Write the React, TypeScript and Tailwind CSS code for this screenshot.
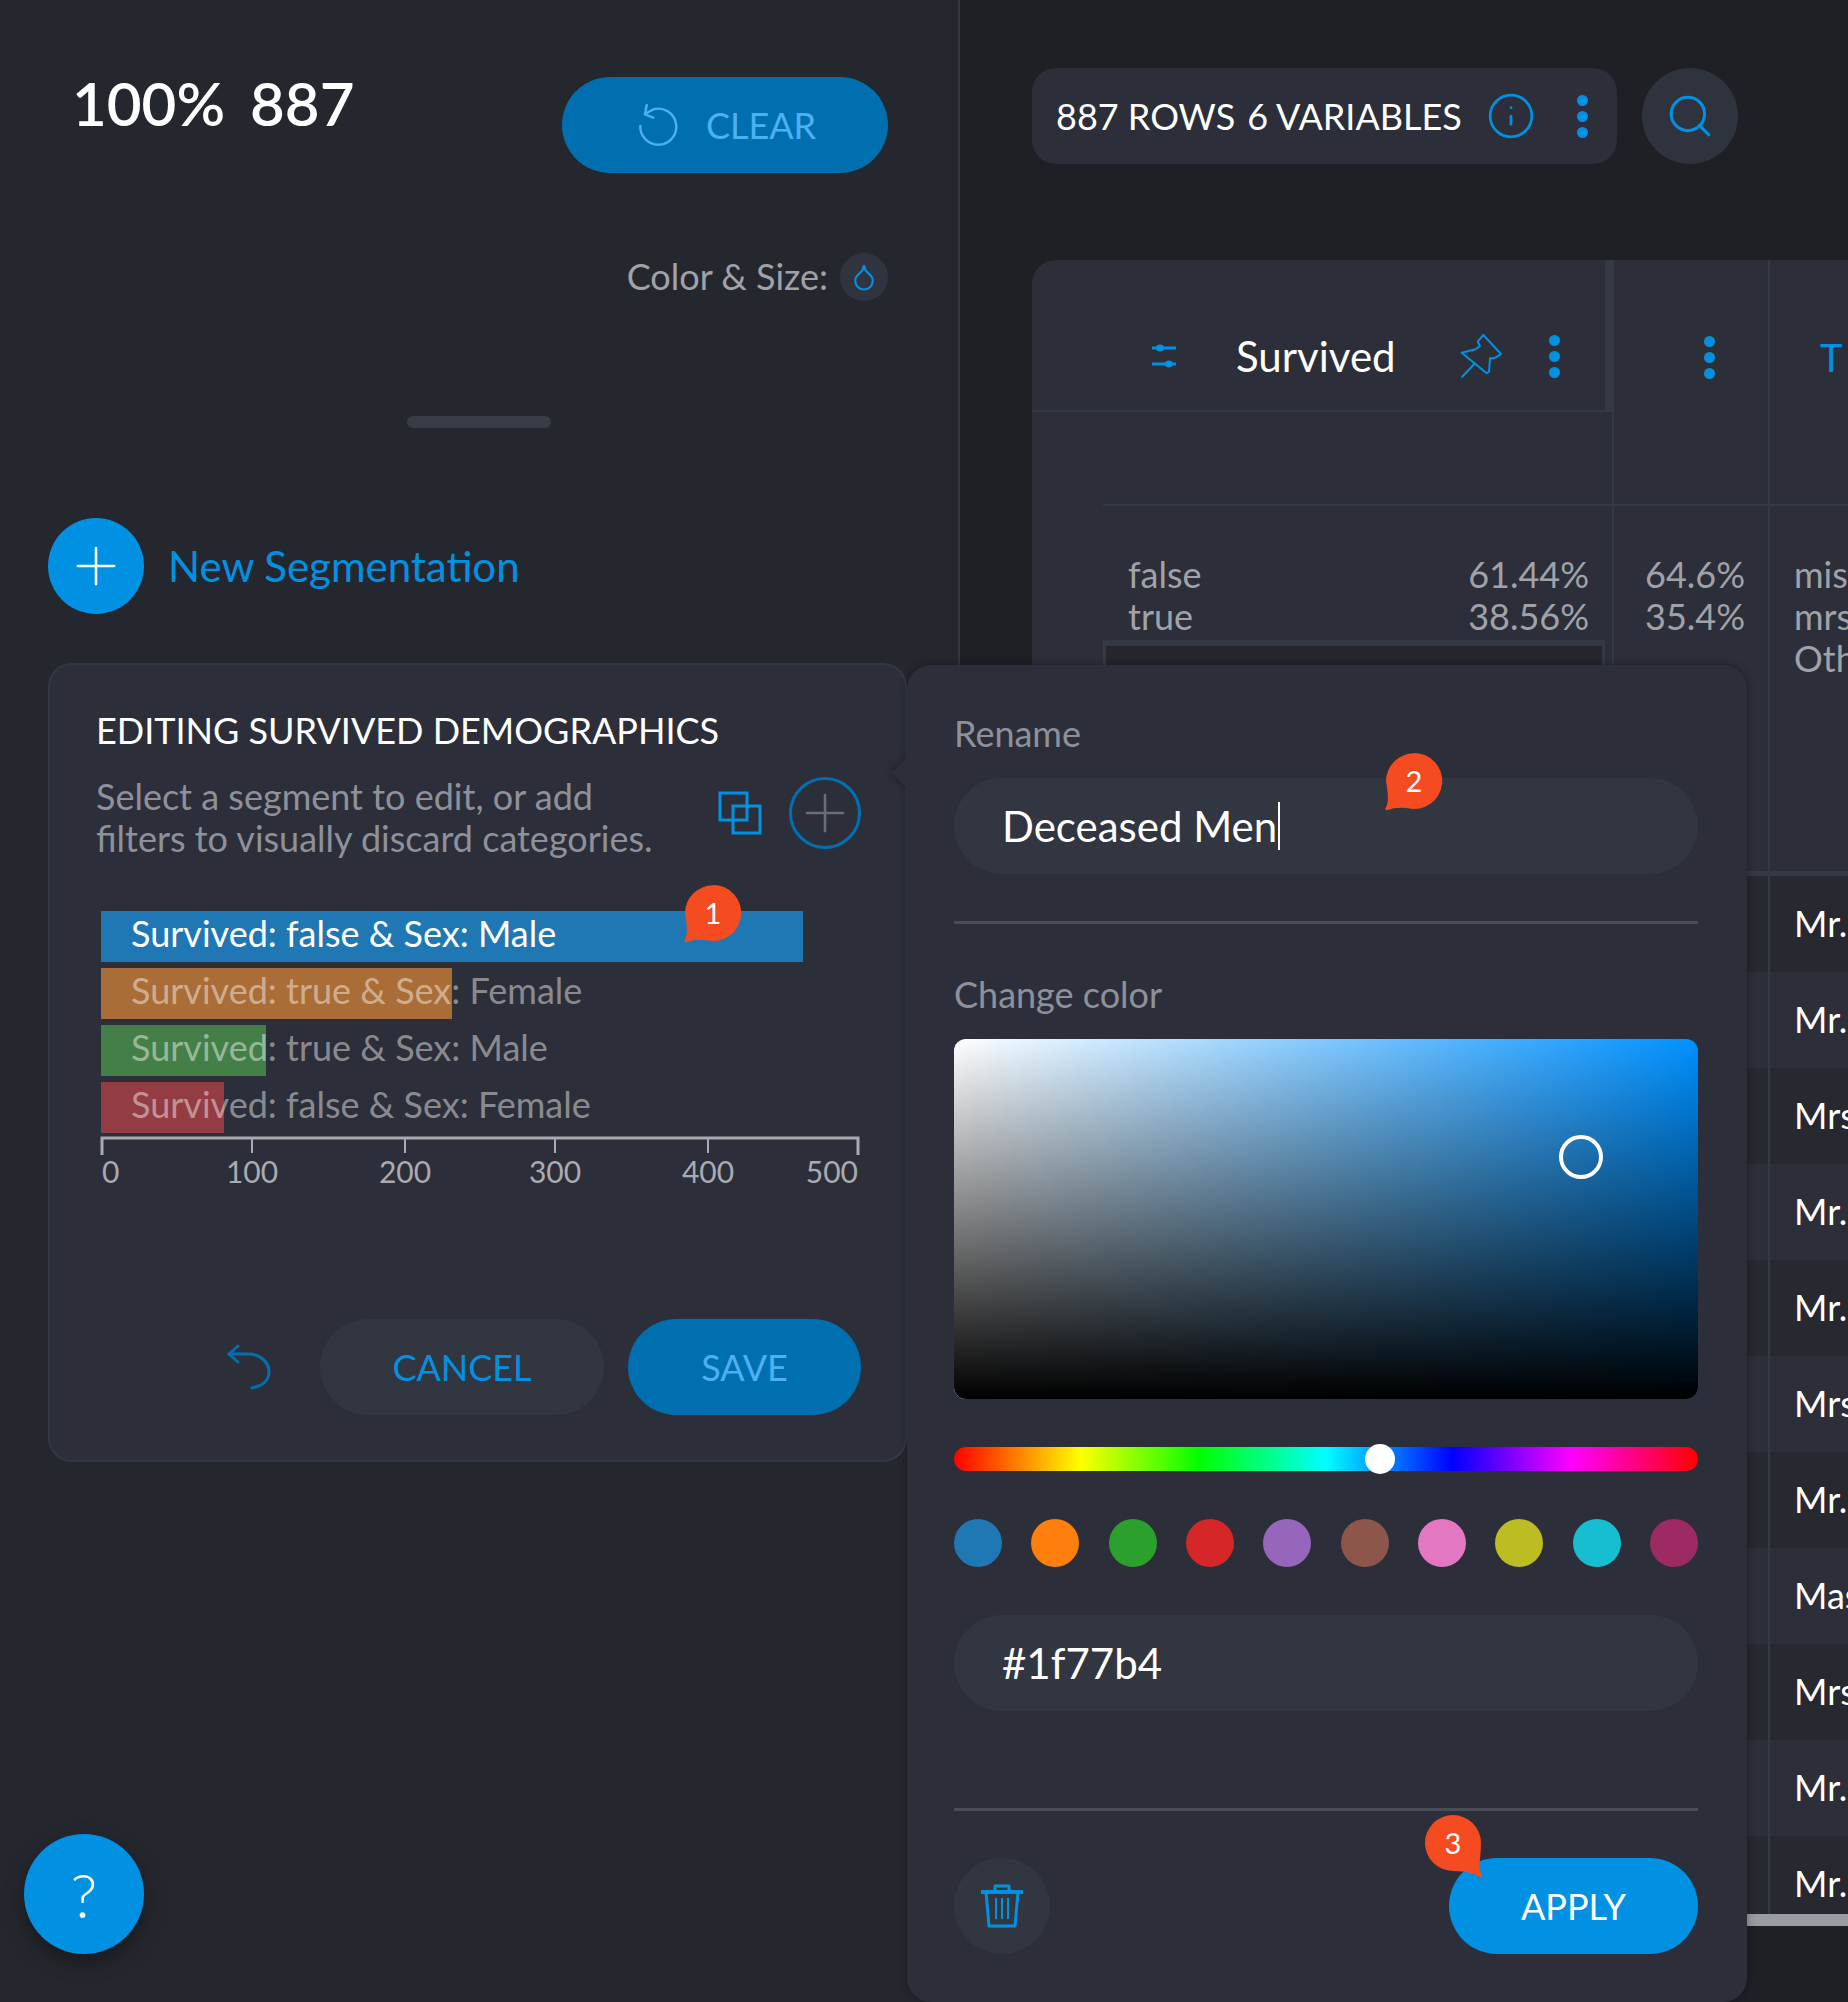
import { Info, Search, Droplet, Plus } from 'lucide-react';

const BAR_ROWS = [
  { label: 'Survived: false & Sex: Male', width: 'w-[702px]', color: 'bg-[#1f77b4]', text: 'text-white' },
  { label: 'Survived: true & Sex: Female', width: 'w-[351px]', color: 'bg-[#aa6d37]', text: 'text-white/45' },
  { label: 'Survived: true & Sex: Male', width: 'w-[165px]', color: 'bg-[#457f48]', text: 'text-white/45' },
  { label: 'Survived: false & Sex: Female', width: 'w-[123px]', color: 'bg-[#933c44]', text: 'text-white/45' },
];

const TICKS = [
  { x: 2, label: '0', anchor: 'start', textX: 2 },
  { x: 152, label: '100', anchor: 'middle', textX: 152 },
  { x: 305, label: '200', anchor: 'middle', textX: 305 },
  { x: 455, label: '300', anchor: 'middle', textX: 455 },
  { x: 608, label: '400', anchor: 'middle', textX: 608 },
  { x: 758, label: '500', anchor: 'end', textX: 758 },
];

const SWATCHES = [
  'bg-[#1f77b4]',
  'bg-[#ff7f0e]',
  'bg-[#2ca02c]',
  'bg-[#d62728]',
  'bg-[#9467bd]',
  'bg-[#8c564b]',
  'bg-[#e377c2]',
  'bg-[#bcbd22]',
  'bg-[#17becf]',
  'bg-[#9e2a63]',
];

const NAMES = [
  'Mr. Owen Harris',
  'Mr. William Henry',
  'Mrs. Jacques Heath',
  'Mr. James Moran',
  'Mr. Timothy McCarthy',
  'Mrs. Oscar Johnson',
  'Mr. Lewis Hickman',
  'Master. Gosta Palsson',
  'Mrs. Nicholas Nasser',
  'Mr. Anders Andersson',
  'Mr. Charles Sage',
];

function Dots({ className }: { className?: string }) {
  return (
    <span className={`flex flex-col gap-[5px] ${className ?? ''}`}>
      <span className="h-[11px] w-[11px] rounded-full bg-[#0091e2]" />
      <span className="h-[11px] w-[11px] rounded-full bg-[#0091e2]" />
      <span className="h-[11px] w-[11px] rounded-full bg-[#0091e2]" />
    </span>
  );
}

function Badge({ n, className, tail }: { n: number; className: string; tail: 'left' | 'right' }) {
  return (
    <span className={`absolute z-20 h-[56px] w-[56px] ${className}`}>
      <svg aria-hidden="true" viewBox="0 0 56 56" className="absolute left-0 top-0 overflow-visible">
        {tail === 'left' ? (
          <path d="M28 0a28 28 0 1 1 -6 55.3c-6 -1 -14 -1 -21 2c-2 0 -2 -2 -1 -3c3 -5 2 -15 0 -26a28 28 0 0 1 28 -28z" fill="#f44b20" />
        ) : (
          <path d="M28 0a28 28 0 0 1 28 28c0 8 -1 16 -2 24l3 9c0 1 -1 2 -2 1c-5 -3 -13 -6 -27 -6a28 28 0 0 1 0 -56z" fill="#f44b20" />
        )}
      </svg>
      <span className="absolute inset-0 flex items-center justify-center text-[29px] text-white">{n}</span>
    </span>
  );
}

function PillInput({ children }: { children: React.ReactNode }) {
  return (
    <div className="flex h-[96px] items-center rounded-full bg-[#323640] pl-[48px] text-[42px] text-white">{children}</div>
  );
}

export default function App() {
  return (
    <div className="relative flex h-[2002px] w-[1848px] overflow-hidden bg-[#1e2025] font-['Lato','Noto_Sans',sans-serif]">
      <aside className="flex h-full w-[960px] shrink-0 flex-col border-r-2 border-[#33363f] bg-[#25272e]">
        <div className="flex items-start justify-between pl-[72px] pr-[70px] pt-[77px]">
          <div className="flex gap-[25px] text-[60px] font-semibold leading-[52px] text-white">
            <span>100%</span>
            <span>887</span>
          </div>
          <button type="button" className="flex h-[96px] w-[326px] items-center justify-center gap-[27px] rounded-full bg-[#006fb0] pl-[3px] text-[36px] text-[#4db0f0]">
            <svg aria-hidden="true" width="42" height="44" viewBox="12 8 42 44" fill="none" stroke="currentColor" strokeWidth="2.4" strokeLinecap="round" strokeLinejoin="round">
              <path d="M20 19L28 14.5A18 18 0 1 1 15.3 31" />
              <path d="M21.7 10L20 19.5L28.3 22.7" />
            </svg>
            CLEAR
          </button>
        </div>

        <div className="mt-[76px] flex items-center justify-end gap-[12px] pr-[70px]">
          <span className="pb-[2px] text-[36px] text-[#a0a2a8]">Color &amp; Size:</span>
          <span className="flex h-[48px] w-[48px] items-center justify-center rounded-full bg-[#30343e] text-[#0091e2]">
            <Droplet size={30} strokeWidth={1.7} />
          </span>
        </div>

        <div className="mx-auto mt-[111px] h-[12px] w-[144px] rounded-full bg-[#383c47]" />

        <div className="ml-[48px] mt-[90px] flex items-center gap-[24px]">
          <span className="flex h-[96px] w-[96px] items-center justify-center rounded-full bg-[#0091e2] text-white">
            <Plus size={62} strokeWidth={1} />
          </span>
          <span className="text-[42px] text-[#0091e2]">New Segmentation</span>
        </div>

        <section className="ml-[48px] mt-[49px] h-[799px] w-[859px] rounded-[24px] border-2 border-[#343844] bg-[#2c2f39] pl-[46px] pr-[44px] pt-[40px]">
          <h2 className="text-[36px] font-normal leading-[50px] text-white">EDITING SURVIVED DEMOGRAPHICS</h2>
          <div className="mt-[20px] flex items-center justify-between">
            <p className="text-[36px] leading-[42px] text-[#8e9199]">
              Select a segment to edit, or add
              <br />
              filters to visually discard categories.
            </p>
            <div className="mb-[8px] flex items-center gap-[27px]">
              <svg aria-hidden="true" width="44" height="44" viewBox="0 0 44 44" fill="none" stroke="#0091e2" strokeWidth="3">
                <rect x="2" y="2" width="27" height="27" />
                <rect x="15" y="15" width="27" height="27" />
              </svg>
              <span className="flex h-[72px] w-[72px] items-center justify-center rounded-full border-[3px] border-[#0070b0] text-[#6a6e78]">
                <Plus size={62} strokeWidth={1} />
              </span>
            </div>
          </div>

          <div className="relative ml-[5px] mt-[52px] flex flex-col gap-[6px]">
            {BAR_ROWS.map((row) => (
              <div key={row.label} className="relative flex h-[51px] items-center pb-[8px]">
                <div className={`absolute inset-y-0 left-0 ${row.width} ${row.color}`} />
                <span className={`relative pl-[30px] text-[36px] ${row.text}`}>{row.label}</span>
              </div>
            ))}
            <Badge n={1} tail="left" className="left-[584px] top-[-26px]" />
          </div>

          <svg aria-hidden="true" width="762" height="60" viewBox="0 0 762 60" className="ml-[4px] mt-[3px] block overflow-visible">
            <path d="M2 19V2H758V19" fill="none" stroke="#a9abb0" strokeWidth="3" />
            {TICKS.map((tick) => (
              <g key={tick.label}>
                <line x1={tick.x} x2={tick.x} y1="2" y2="17" stroke="#a9abb0" strokeWidth="2" />
                <text x={tick.textX} y="47" textAnchor={tick.anchor} fontSize="30" fill="#a9abb0">
                  {tick.label}
                </text>
              </g>
            ))}
          </svg>

          <div className="mt-[123px] flex items-center justify-end">
            <svg aria-hidden="true" width="44" height="46" viewBox="0 0 44 46" fill="none" stroke="#0070b0" strokeWidth="3" strokeLinecap="round" strokeLinejoin="round" className="mr-[49px]">
              <path d="M11 2L2 10L11 18" />
              <path d="M2 10H21C33 10 42 18 42 28C42 36 36 42 25 44" />
            </svg>
            <button type="button" className="h-[96px] w-[284px] rounded-full bg-[#323640] text-[36px] text-[#0091e2]">CANCEL</button>
            <button type="button" className="ml-[24px] h-[96px] w-[233px] rounded-full bg-[#006fb0] text-[36px] text-[#4db0f0]">SAVE</button>
          </div>
        </section>
      </aside>

      <main className="ml-[72px] flex min-w-0 flex-1 flex-col pt-[68px]">
        <div className="flex items-center gap-[25px]">
          <div className="flex h-[96px] w-[585px] items-center rounded-[24px] bg-[#2c2f39] pl-[24px] text-[36px] text-white">
            <span>887 ROWS</span>
            <span className="ml-[12px]">6 VARIABLES</span>
            <Info size={50} strokeWidth={1.3} className="ml-[24px] shrink-0 text-[#0091e2]" />
            <Dots className="ml-[41px]" />
          </div>
          <span className="flex h-[96px] w-[96px] items-center justify-center rounded-full bg-[#2f333d] text-[#0091e2]">
            <Search size={50} strokeWidth={1.5} />
          </span>
        </div>

        <div className="mt-[96px] flex h-[1654px] shrink-0 overflow-hidden rounded-tl-[24px] bg-[#2c2f39]">
          <div className="relative flex h-full w-[580px] shrink-0 flex-col">
            <div className="flex h-[152px] w-[580px] shrink-0 items-center border-b-2 border-r-[7px] border-[#353944] pl-[119px] pt-[42px]">
              <svg aria-hidden="true" width="26" height="26" viewBox="0 0 26 26" fill="none" stroke="#0091e2" strokeWidth="3">
                <path d="M1 5h24M1 21h24" />
                <ellipse cx="9" cy="5" rx="4" ry="3.5" fill="#0091e2" stroke="none" />
                <ellipse cx="18" cy="21" rx="4" ry="3.5" fill="#0091e2" stroke="none" />
              </svg>
              <span className="ml-[59px] text-[42px] text-white">Survived</span>
              <svg aria-hidden="true" width="43" height="44" viewBox="5 4 43 44" fill="none" stroke="#0091e2" strokeWidth="2" strokeLinejoin="round" strokeLinecap="round" className="ml-[64px]">
                <path d="M6.7 22.7L20.7 19.3L25 16L22.7 11.7L28.3 5L46 24L39.3 28.3L35 28.3L34 41.7L31.7 43.3Z" />
                <path d="M7.3 46.7L20 33.3" />
              </svg>
              <Dots className="ml-[46px]" />
            </div>
            <div className="ml-[71px] mt-[92px] h-[2px] shrink-0 bg-[#353944]" />
            <div className="ml-[96px] mr-[23px] mt-[47px] grid shrink-0 grid-cols-[1fr_auto] text-[36px] leading-[42px] text-[#a0a2a8]">
              <span>false</span>
              <span>61.44%</span>
              <span>true</span>
              <span>38.56%</span>
            </div>
            <div className="ml-[71px] mr-[7px] mt-[3px] h-[300px] shrink-0 border-x-[3px] border-t-[6px] border-[#353944] bg-[#24262c]" />
          </div>

          <div className="flex h-full w-[156px] shrink-0 flex-col border-l-2 border-[#353944]">
            <div className="flex h-[152px] shrink-0 items-center justify-end pr-[53px] pt-[42px]">
              <Dots />
            </div>
            <div className="mt-[92px] h-[2px] shrink-0 bg-[#353944]" />
            <div className="mt-[47px] h-[318px] shrink-0 pr-[23px] text-right text-[36px] leading-[42px] text-[#a0a2a8]">
              <div>64.6%</div>
              <div>35.4%</div>
            </div>
            <div className="h-[5px] shrink-0 bg-[#353944]" />
            {NAMES.map((name, i) => (
              <div key={name} className={`h-[96px] shrink-0 ${i % 2 === 0 ? 'bg-[#272930]' : 'bg-[#2c2f39]'}`} />
            ))}
          </div>

          <div className="flex h-full min-w-0 flex-1 flex-col border-l-2 border-[#353944]">
            <div className="flex h-[152px] shrink-0 items-center pl-[50px] pt-[42px] text-[38px] text-[#0091e2]">T</div>
            <div className="mt-[92px] h-[2px] shrink-0 bg-[#353944]" />
            <div className="mt-[47px] h-[318px] shrink-0 pl-[24px] text-[36px] leading-[42px] text-[#a0a2a8]">
              <div>miss</div>
              <div>mrs</div>
              <div>Other</div>
            </div>
            <div className="h-[5px] shrink-0 bg-[#353944]" />
            {NAMES.map((name, i) => (
              <div key={name} className={`flex h-[96px] shrink-0 items-center overflow-hidden whitespace-nowrap pb-[3px] pl-[24px] text-[36px] text-white ${i % 2 === 0 ? 'bg-[#272930]' : 'bg-[#2c2f39]'}`}>
                {name}
              </div>
            ))}
          </div>
        </div>
        <div className="h-[12px] shrink-0 bg-[#9a9ca3]" />
      </main>

      <div className="absolute left-[907px] top-[665px] z-10 h-[1337px] w-[840px] rounded-[24px] bg-[#2c2f39] pl-[47px] pr-[49px] pt-[43px] drop-shadow-[0_0_4px_rgba(0,0,0,0.35)]">
        <span className="absolute left-[-11px] top-[97px] h-[22px] w-[22px] rotate-45 bg-[#2c2f39]" />
        <div className="relative text-[36px] leading-[50px] text-[#8e9199]">Rename</div>
        <div className="relative mt-[20px]">
          <PillInput>
            Deceased Men
            <span className="ml-[1px] inline-block h-[48px] w-[2px] bg-white" />
          </PillInput>
          <Badge n={2} tail="left" className="left-[432px] top-[-25px]" />
        </div>
        <div className="mt-[47px] h-[3px] bg-[#4a4d57]" />
        <div className="mt-[45px] text-[36px] leading-[50px] text-[#8e9199]">Change color</div>
        <div className="relative mt-[20px] h-[360px] overflow-hidden rounded-[12px] bg-[#0091ff]">
          <div className="absolute inset-0 bg-gradient-to-r from-white to-transparent" />
          <div className="absolute inset-0 bg-gradient-to-b from-transparent to-black" />
          <span className="absolute left-[605px] top-[96px] h-[44px] w-[44px] rounded-full border-[4px] border-white" />
        </div>
        <div className="relative mt-[48px] h-[24px] rounded-full bg-[linear-gradient(90deg,#f00_0%,#ff0_17%,#0f0_33%,#0ff_50%,#00f_67%,#f0f_83%,#f00_100%)]">
          <span className="absolute left-[411px] top-[-3px] h-[30px] w-[30px] rounded-full bg-white" />
        </div>
        <div className="mt-[48px] flex justify-between">
          {SWATCHES.map((swatch) => (
            <span key={swatch} className={`h-[48px] w-[48px] rounded-full ${swatch}`} />
          ))}
        </div>
        <div className="mt-[48px]">
          <PillInput>#1f77b4</PillInput>
        </div>
        <div className="mt-[97px] h-[3px] bg-[#4a4d57]" />
        <div className="relative mt-[47px] flex items-center justify-between">
          <span className="flex h-[96px] w-[96px] items-center justify-center rounded-full bg-[#323640]">
            <svg aria-hidden="true" width="42" height="44" viewBox="0 0 42 44" fill="none" stroke="#0091e2" strokeWidth="3" strokeLinejoin="round">
              <path d="M0 8H42" strokeWidth="4" />
              <path d="M14 7V2H28V7" />
              <path d="M5 8L8 42H34L37 8" />
              <path d="M15 14V35M21 14V35M27 14V35" strokeWidth="2" />
            </svg>
          </span>
          <button type="button" className="h-[96px] w-[249px] rounded-full bg-[#0091e2] text-[36px] text-white">APPLY</button>
          <Badge n={3} tail="right" className="left-[471px] top-[-43px]" />
        </div>
      </div>

      <button type="button" className="absolute bottom-[48px] left-[24px] z-10 flex h-[120px] w-[120px] items-center justify-center rounded-full bg-[#0091e2] text-[62px] font-light text-white shadow-[0_8px_20px_rgba(0,0,0,0.35)]">?</button>
    </div>
  );
}
